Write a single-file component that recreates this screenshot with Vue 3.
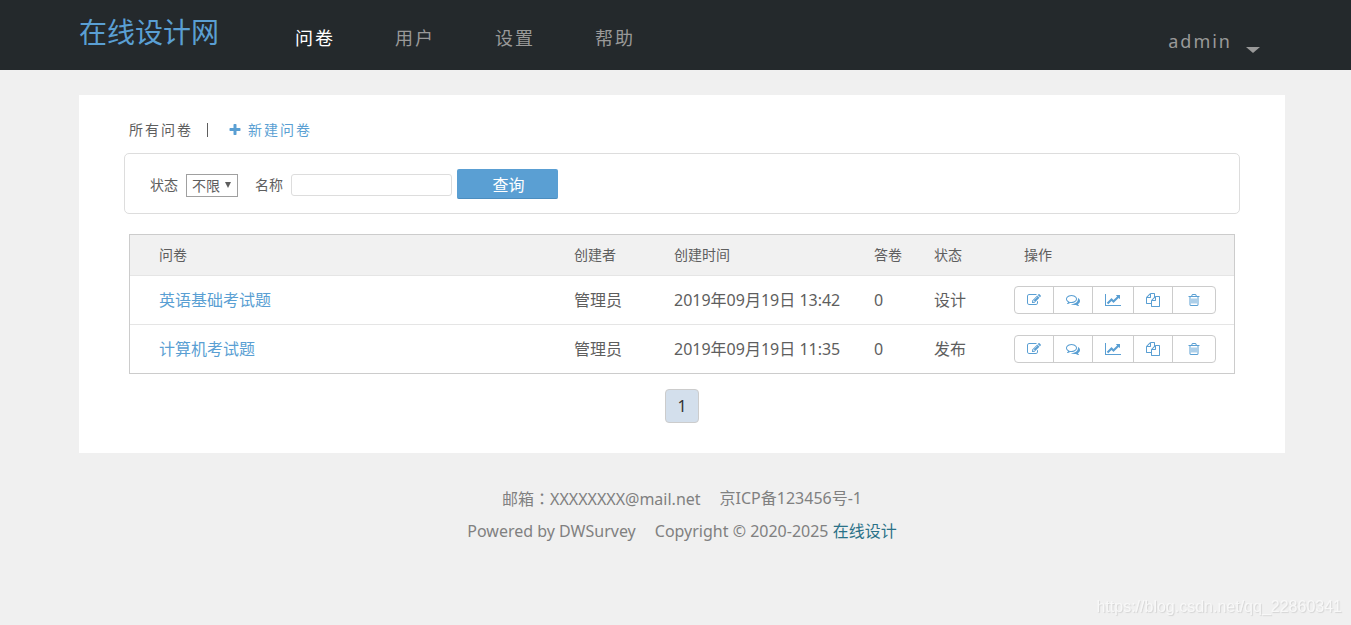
<script setup>
import { ref } from 'vue'

const nav = ['问卷', '用户', '设置', '帮助']
const active = ref('问卷')
const status = ref('不限')
const name = ref('')

const surveys = [
  { title: '英语基础考试题', owner: '管理员', time: '2019年09月19日 13:42', count: 0, state: '设计' },
  { title: '计算机考试题', owner: '管理员', time: '2019年09月19日 11:35', count: 0, state: '发布' },
]

const plusPath =
  'M1600 736v192q0 40-28 68t-68 28h-416v416q0 40-28 68t-68 28h-192q-40 0-68-28t-28-68v-416h-416q-40 0-68-28t-28-68v-192q0-40 28-68t68-28h416v-416q0-40 28-68t68-28h192q40 0 68 28t28 68v416h416q40 0 68 28t28 68z'

const actions = [
  {
    label: '编辑',
    kind: 'normal',
    box: '0 0 1792 1792',
    d: 'M888 1184l116-116-152-152-116 116v56h96v96h56zm440-720q-16-16-33 1l-350 350q-17 17-1 33t33-1l350-350q17-17 1-33zm80 594v190q0 119-84.5 203.5t-203.5 84.5h-832q-119 0-203.5-84.5t-84.5-203.5v-832q0-119 84.5-203.5t203.5-84.5h832q63 0 117 25 15 7 18 23 3 17-9 29l-49 49q-14 14-32 8-23-6-45-6h-832q-66 0-113 47t-47 113v832q0 66 47 113t113 47h832q66 0 113-47t47-113v-126q0-13 9-22l64-64q15-15 35-7t20 29zm-96-738l288 288-672 672h-288v-288zm444 132l-92 92-288-288 92-92q28-28 68-28t68 28l152 152q28 28 28 68t-28 68z',
  },
  {
    label: '答卷地址',
    kind: 'normal',
    box: '0 0 1792 1792',
    d: 'M704 384q-153 0-286 52t-211.5 141-78.5 191q0 82 53 158t149 132l97 56-35 84q34-20 62-39l44-31 53 10q78 14 153 14 153 0 286-52t211.5-141 78.5-191-78.5-191-211.5-141-286-52zm0-128q191 0 353.5 68.5t256.5 186.5 94 257-94 257-256.5 186.5-353.5 68.5q-86 0-176-16-124 88-278 128-36 9-86 16h-3q-11 0-20.5-8t-11.5-21q-1-3-1-6.5t.5-6.5 2-6l2.5-5 3.5-5.5 4-5 4.5-5 4-4.5q5-6 23-25t26-29.5 22.5-29 25-38.5 20.5-44q-124-72-195-177t-71-224q0-139 94-257t256.5-186.5 353.5-68.5zm822 1169q10 24 20.5 44t25 38.5 22.5 29 26 29.5 23 25q1 1 4 4.5t4.5 5 4 5 3.5 5.5l2.5 5 2 6 .5 6.5-1 6.5q-3 14-13 22t-22 7q-50-7-86-16-154-40-278-128-90 16-176 16-271 0-472-132 58 4 88 4 161 0 309-45t264-129q125-92 192-212t67-254q0-77-23-152 129 71 204 178t75 230q0 120-71 224.5t-195 176.5z',
  },
  {
    label: '统计',
    kind: 'wide',
    box: '0 0 2048 1792',
    d: 'M2048 1536v128h-2048v-1536h128v1408h1920zm-128-1248v435q0 21-19.5 29.5t-35.5-7.5l-121-121-633 633q-10 10-23 10t-23-10l-233-233-416 416-192-192 585-585q10-10 23-10t23 10l233 233 464-464-121-121q-16-16-7.5-35.5t29.5-19.5h435q14 0 23 9t9 23z',
  },
  {
    label: '复制',
    kind: 'normal',
    box: '0 0 1792 1792',
    d: 'M1696 384q40 0 68 28t28 68v1216q0 40-28 68t-68 28h-960q-40 0-68-28t-28-68v-288h-544q-40 0-68-28t-28-68v-672q0-40 20-88t48-76l408-408q28-28 76-48t88-20h416q40 0 68 28t28 68v328q68-40 128-40h416zm-544 213l-299 299h299v-299zm-640-384l-299 299h299v-299zm196 647l316-316v-416h-384v416q0 40-28 68t-68 28h-416v640h512v-256q0-40 20-88t48-76zm956 804v-1152h-384v416q0 40-28 68t-68 28h-416v640h896z',
  },
  {
    label: '删除',
    kind: 'last',
    box: '0 0 1792 1792',
    d: 'M704 736v576q0 14-9 23t-23 9h-64q-14 0-23-9t-9-23v-576q0-14 9-23t23-9h64q14 0 23 9t9 23zm256 0v576q0 14-9 23t-23 9h-64q-14 0-23-9t-9-23v-576q0-14 9-23t23-9h64q14 0 23 9t9 23zm256 0v576q0 14-9 23t-23 9h-64q-14 0-23-9t-9-23v-576q0-14 9-23t23-9h64q14 0 23 9t9 23zm128 724v-948h-896v948q0 22 7 40.5t14.5 27 10.5 8.5h832q3 0 10.5-8.5t14.5-27 7-40.5zm-672-1076h448l-48-117q-7-9-17-11h-317q-10 2-17 11zm928 32v64q0 14-9 23t-23 9h-96v948q0 83-47 143.5t-113 60.5h-832q-66 0-113-58.5t-47-141.5v-952h-96q-14 0-23-9t-9-23v-64q0-14 9-23t23-9h309l70-167q15-37 54-63t79-26h320q40 0 79 26t54 63l70 167h309q14 0 23 9t9 23z',
  },
]
</script>

<template>
  <div class="page" lang="zh-CN">
    <header class="topbar">
      <a class="logo" href="#">在线设计网</a>
      <nav class="nav">
        <a
          v-for="item in nav"
          :key="item"
          href="#"
          :class="{ active: item === active }"
          @click.prevent="active = item"
        >{{ item }}</a>
      </nav>
      <button class="account" type="button">
        <span>admin</span>
        <svg class="caret" viewBox="0 0 14 6" aria-hidden="true"><path d="M0 0h14L7 6z" /></svg>
      </button>
    </header>

    <main class="card">
      <div class="tabs">
        <a class="all" href="#">所有问卷</a>
        <span class="divider"></span>
        <a class="create" href="#">
          <svg viewBox="0 0 1792 1792" aria-hidden="true"><path :d="plusPath" /></svg>
          <span>新建问卷</span>
        </a>
      </div>

      <form class="filter" @submit.prevent>
        <label for="status">状态</label>
        <span class="select-box">
          <select id="status" v-model="status">
            <option>不限</option>
            <option>设计</option>
            <option>发布</option>
          </select>
          <svg viewBox="0 0 6 6" aria-hidden="true"><path d="M0 0h6L3 6z" /></svg>
        </span>
        <label class="name-label" for="name">名称</label>
        <input id="name" v-model="name" type="text" />
        <button type="submit">查询</button>
      </form>

      <table class="surveys">
        <colgroup>
          <col />
          <col class="c-owner" />
          <col class="c-time" />
          <col class="c-count" />
          <col class="c-state" />
          <col class="c-ops" />
        </colgroup>
        <thead>
          <tr>
            <th>问卷</th>
            <th>创建者</th>
            <th>创建时间</th>
            <th>答卷</th>
            <th>状态</th>
            <th class="ops-head">操作</th>
          </tr>
        </thead>
        <tbody>
          <tr v-for="s in surveys" :key="s.title">
            <td><a href="#">{{ s.title }}</a></td>
            <td>{{ s.owner }}</td>
            <td>{{ s.time }}</td>
            <td>{{ s.count }}</td>
            <td>{{ s.state }}</td>
            <td>
              <div class="group">
                <button
                  v-for="a in actions"
                  :key="a.label"
                  type="button"
                  :class="a.kind"
                  :aria-label="a.label"
                >
                  <svg :viewBox="a.box" aria-hidden="true"><path :d="a.d" /></svg>
                </button>
              </div>
            </td>
          </tr>
        </tbody>
      </table>

      <div class="pager">
        <a href="#" aria-current="page">1</a>
      </div>
    </main>

    <footer class="footer">
      <p><span>邮箱<span class="colon" lang="zh-TW">：</span>XXXXXXXX@mail.net</span><span>京ICP备123456号-1</span></p>
      <p><span>Powered by DWSurvey</span><span>Copyright © 2020-2025 <a href="#">在线设计</a></span></p>
    </footer>

    <div class="watermark">https://blog.csdn.net/qq_22860341</div>
  </div>
</template>

<style>
body {
  margin: 0;
  background: #f0f0f0;
}
</style>

<style scoped>
* {
  box-sizing: border-box;
}
.page {
  min-height: 100vh;
  color: #5e5e5e;
  font-family: "Noto Sans", "Noto Sans CJK SC", sans-serif;
  font-size: 16px;
  line-height: 24px;
}
a {
  color: #5a9fd3;
  text-decoration: none;
}
button,
input,
select {
  font-family: inherit;
  color: inherit;
}
svg {
  display: block;
  fill: currentColor;
}
.topbar {
  display: flex;
  align-items: flex-start;
  height: 70px;
  padding: 0 91px 0 79px;
  background: #24292c;
}
.logo {
  padding-top: 12px;
  font-size: 28px;
  line-height: 40px;
}
.nav {
  display: flex;
  flex: 1;
  padding: 23px 0 0 46px;
}
.nav a {
  padding: 0 30px;
  color: #999;
  font-size: 18px;
  line-height: 30px;
  letter-spacing: 2px;
}
.nav .active {
  color: #fff;
}
.account {
  display: flex;
  align-items: center;
  gap: 14px;
  margin-top: 26px;
  padding: 0;
  border: 0;
  background: none;
  color: #999;
  font-size: 18px;
  line-height: 30px;
  letter-spacing: 2px;
}
.caret {
  width: 14px;
  height: 6px;
  margin-top: 18px;
}
.card {
  margin: 25px 66px 0 79px;
  padding: 20px 45px 30px;
  background: #fff;
}
.tabs {
  display: flex;
  align-items: center;
  height: 30px;
  padding-left: 5px;
  font-size: 14px;
  letter-spacing: 2px;
}
.all {
  color: #5e5e5e;
}
.divider {
  width: 1px;
  height: 14px;
  margin: 0 20px 0 14px;
  background: #5e5e5e;
}
.create {
  display: flex;
  align-items: center;
  gap: 6px;
}
.create svg {
  width: 14px;
  height: 14px;
}
.filter {
  display: flex;
  align-items: center;
  margin-top: 8px;
  padding: 15px 25px 14px;
  border: 1px solid #ddd;
  border-radius: 5px;
  font-size: 14px;
}
.filter label,
.filter input,
.select-box {
  margin-top: 2px;
}
.filter label {
  margin-right: 8px;
}
.filter .name-label {
  margin-left: 17px;
}
.select-box {
  position: relative;
}
.select-box select {
  display: block;
  width: 52px;
  height: 23px;
  padding: 0 5px;
  border: 1px solid #a0a0a0;
  border-radius: 0;
  background: #fff;
  appearance: none;
  font-size: 14px;
}
.select-box svg {
  position: absolute;
  top: 8px;
  right: 7px;
  width: 6px;
  height: 6px;
  pointer-events: none;
}
.filter input {
  width: 161px;
  height: 22px;
  margin-right: 5px;
  padding: 0 5px;
  border: 1px solid #ddd;
  border-radius: 3px;
  font-size: 14px;
}
.filter button {
  width: 101px;
  height: 30px;
  padding: 0 0 0 2px;
  border: 0;
  border-bottom: 1px solid #4b8dbf;
  border-radius: 2px;
  background: #5a9fd3;
  color: #fff;
  font-size: 16px;
}
.surveys {
  width: calc(100% - 10px);
  margin: 20px 5px 0;
  border: 1px solid #ccc;
  border-spacing: 0;
  table-layout: fixed;
}
.c-owner {
  width: 100px;
}
.c-time {
  width: 200px;
}
.c-count {
  width: 60px;
}
.c-state {
  width: 80px;
}
.c-ops {
  width: 220px;
}
th,
td {
  padding: 0;
  text-align: left;
  white-space: nowrap;
}
th {
  height: 41px;
  border-bottom: 1px solid #e5e5e5;
  background: #f1f1f1;
  font-size: 14px;
  font-weight: 400;
}
td {
  height: 49px;
  border-bottom: 1px solid #e5e5e5;
}
tbody tr:last-child td {
  height: 48px;
  border-bottom: 0;
}
th:first-child,
td:first-child {
  padding-left: 29px;
}
th.ops-head {
  padding-left: 10px;
}
.group {
  display: inline-flex;
  vertical-align: middle;
  border: 1px solid #ccc;
  border-radius: 4px;
}
.group button {
  display: flex;
  align-items: center;
  justify-content: center;
  width: 39px;
  height: 26px;
  padding: 0;
  border: 0;
  border-right: 1px solid #ccc;
  background: none;
  color: #5a9fd3;
}
.group .wide {
  width: 41px;
}
.group .last {
  width: 42px;
  border-right: 0;
}
.group svg {
  width: 14px;
  height: 14px;
}
.group .wide svg {
  width: 16px;
}
.pager {
  display: flex;
  justify-content: center;
  margin-top: 15px;
}
.pager a {
  width: 34px;
  border: 1px solid #ccc;
  border-radius: 4px;
  background: #d3dfec;
  color: #333;
  line-height: 32px;
  text-align: center;
}
.footer {
  margin: 29px 66px 0 79px;
  color: #808080;
  line-height: 32px;
}
.footer p {
  display: flex;
  justify-content: center;
  gap: 19px;
  margin: 0;
}
.footer a {
  color: #2b7288;
}
.colon {
  font-family: "Noto Sans CJK TC", sans-serif;
}
.watermark {
  position: fixed;
  right: 9px;
  bottom: 6px;
  color: #f8f8f8;
  font-family: "Liberation Sans", sans-serif;
  font-size: 16px;
  text-shadow: 1px 1px 1px #d4d4d4;
}
</style>
